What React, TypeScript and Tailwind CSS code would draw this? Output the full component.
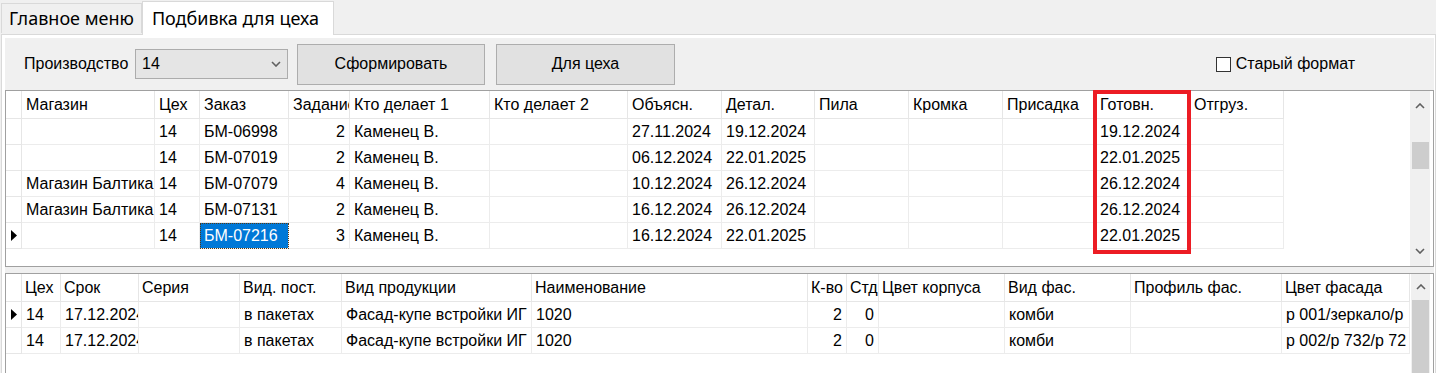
import React from "react";

type Col = { title: string; w: string; right?: boolean };

const topCols: Col[] = [
  { title: "Магазин", w: "w-[133px]" },
  { title: "Цех", w: "w-[45px]" },
  { title: "Заказ", w: "w-[89px]" },
  { title: "Задание", w: "w-[61px]", right: true },
  { title: "Кто делает 1", w: "w-[140px]" },
  { title: "Кто делает 2", w: "w-[138px]" },
  { title: "Объясн.", w: "w-[94px]" },
  { title: "Детал.", w: "w-[93px]" },
  { title: "Пила", w: "w-[94px]" },
  { title: "Кромка", w: "w-[94px]" },
  { title: "Присадка", w: "w-[93px]" },
  { title: "Готовн.", w: "w-[94px]" },
  { title: "Отгруз.", w: "w-[94px]" },
];

const topRows: string[][] = [
  ["", "14", "БМ-06998", "2", "Каменец В.", "", "27.11.2024", "19.12.2024", "", "", "", "19.12.2024", ""],
  ["", "14", "БМ-07019", "2", "Каменец В.", "", "06.12.2024", "22.01.2025", "", "", "", "22.01.2025", ""],
  ["Магазин Балтика", "14", "БМ-07079", "4", "Каменец В.", "", "10.12.2024", "26.12.2024", "", "", "", "26.12.2024", ""],
  ["Магазин Балтика", "14", "БМ-07131", "2", "Каменец В.", "", "16.12.2024", "26.12.2024", "", "", "", "26.12.2024", ""],
  ["", "14", "БМ-07216", "3", "Каменец В.", "", "16.12.2024", "22.01.2025", "", "", "", "22.01.2025", ""],
];

const bottomCols: Col[] = [
  { title: "Цех", w: "w-[39px]" },
  { title: "Срок", w: "w-[78px]" },
  { title: "Серия", w: "w-[101px]" },
  { title: "Вид. пост.", w: "w-[102px]" },
  { title: "Вид продукции", w: "w-[190px]" },
  { title: "Наименование", w: "w-[276px]" },
  { title: "К-во", w: "w-[39px]", right: true },
  { title: "Стд", w: "w-[32px]", right: true },
  { title: "Цвет корпуса", w: "w-[126px]" },
  { title: "Вид фас.", w: "w-[126px]" },
  { title: "Профиль фас.", w: "w-[151px]" },
  { title: "Цвет фасада", w: "w-[128px]" },
];

const bottomRows: string[][] = [
  ["14", "17.12.2024", "", "в пакетах", "Фасад-купе встройки ИГ", "1020", "2", "0", "", "комби", "", "р 001/зеркало/р"],
  ["14", "17.12.2024", "", "в пакетах", "Фасад-купе встройки ИГ", "1020", "2", "0", "", "комби", "", "р 002/р 732/р 72"],
];

function Chevron({ up }: { up?: boolean }) {
  return (
    <svg width="10" height="6" viewBox="0 0 10 6" className="block">
      <polyline
        points={up ? "1,5 5,1 9,5" : "1,1 5,5 9,1"}
        fill="none"
        stroke="#606060"
        strokeWidth="1.6"
      />
    </svg>
  );
}

function RowArrow() {
  return (
    <svg width="7" height="11" viewBox="0 0 7 11" className="block">
      <polygon points="0,0 6,5.5 0,11" fill="#000" />
    </svg>
  );
}

function Grid({
  cols,
  rows,
  currentRow,
  selected,
  headerPad,
}: {
  cols: Col[];
  rows: string[][];
  currentRow: number;
  selected?: [number, number];
  headerPad: string;
}) {
  return (
    <div className="flex-1 min-w-0 bg-white">
      <div className="flex h-[28px] leading-[28px]">
        <div className="w-[16px] shrink-0 border-r border-b border-[#e6e6e6]" />
        {cols.map((c) => (
          <div
            key={c.title}
            className={`${c.w} ${headerPad} shrink-0 overflow-hidden whitespace-nowrap border-r border-b border-[#e6e6e6]`}
          >
            {c.title}
          </div>
        ))}
      </div>
      {rows.map((r, ri) => (
        <div key={ri} className="flex h-[26px] leading-[25px]">
          <div className="w-[16px] shrink-0 border-r border-b border-[#e6e6e6] flex items-center pl-[5px]">
            {ri === currentRow && <RowArrow />}
          </div>
          {cols.map((c, ci) => {
            const isSel = selected && selected[0] === ri && selected[1] === ci;
            return (
              <div
                key={ci}
                className={`${c.w} shrink-0 overflow-hidden whitespace-nowrap border-r border-b border-[#ececec] ${
                  c.right ? "text-right pr-[4px] pl-[2px]" : "pl-[4px] pr-[2px]"
                } ${isSel ? "bg-[#0078d7] text-white outline-1 outline-dotted outline-[#5b3a12] -outline-offset-1" : ""}`}
              >
                {r[ci]}
              </div>
            );
          })}
        </div>
      ))}
    </div>
  );
}

export default function App() {
  return (
    <div className="w-[1436px] h-[373px] overflow-hidden bg-[#f0f0f0] text-[16px] text-black font-['Liberation_Sans',Arial,sans-serif]">
      {/* tabs */}
      <div className="relative z-10 flex items-end h-[34px] pl-[1px] font-['Noto_Sans',sans-serif] text-[18px]">
        <div className="h-[30px] mb-[1px] px-[7px] leading-[28px] border border-b-0 border-[#d9d9d9] bg-[#f0f0f0]">
          Главное меню
        </div>
        <div className="h-[34px] -mb-px pl-[9px] pr-[14px] leading-[32px] border border-b-0 border-[#d9d9d9] bg-white">
          Подбивка для цеха
        </div>
      </div>

      {/* tab page */}
      <div className="ml-px w-[1435px] h-[345px] border border-[#d9d9d9] bg-white pl-[3px] pr-[1px] pt-[3px]">
        <div className="h-full bg-[#f0f0f0] flex flex-col">
          {/* toolbar */}
          <div className="h-[52px] shrink-0 flex items-center pl-[19px]">
            <span className="w-[111px] shrink-0">Производство</span>
            <div className="w-[153px] h-[30px] shrink-0 flex items-center justify-between pl-[6px] pr-[6px] bg-[#e5e5e5] border border-[#acacac]">
              <span>14</span>
              <Chevron />
            </div>
            <button className="ml-[9px] w-[188px] h-[41px] shrink-0 bg-[#e1e1e1] border border-[#adadad]">
              Сформировать
            </button>
            <button className="ml-[11px] w-[179px] h-[41px] shrink-0 bg-[#e1e1e1] border border-[#adadad]">
              Для цеха
            </button>
            <label className="ml-auto mr-[79px] flex items-center gap-[5px]">
              <span className="w-[15px] h-[15px] border border-[#333] bg-white" />
              <span>Старый формат</span>
            </label>
          </div>

          {/* top grid */}
          <div className="relative h-[177px] shrink-0 flex border border-[#a0a0a0] bg-white">
            <Grid cols={topCols} rows={topRows} currentRow={4} selected={[4, 2]} headerPad="pl-[4px]" />
            <div className="w-[20px] shrink-0 bg-[#f0f0f0] flex flex-col items-center">
              <div className="h-[30px] flex items-center">
                <Chevron up />
              </div>
              <div className="mt-[21px] w-[17px] h-[27px] bg-[#cdcdcd]" />
              <div className="mt-auto h-[30px] flex items-center">
                <Chevron />
              </div>
            </div>
            <div className="w-[3px] shrink-0" />
            {/* annotation frame */}
            <div className="absolute left-[1087px] top-[-1px] w-[98px] h-[164px] border-4 border-[#ec1c24]" />
          </div>

          {/* bottom grid */}
          <div className="mt-[6px] h-[130px] shrink-0 flex border border-[#a0a0a0] bg-white">
            <Grid cols={bottomCols} rows={bottomRows} currentRow={0} headerPad="pl-[3px]" />
            <div className="w-[19px] shrink-0 bg-[#f0f0f0] flex flex-col items-center">
              <div className="h-[26px] flex items-center">
                <Chevron up />
              </div>
              <div className="w-[17px] flex-1 bg-[#cdcdcd]" />
            </div>
            <div className="w-[3px] shrink-0" />
          </div>
        </div>
      </div>
    </div>
  );
}
